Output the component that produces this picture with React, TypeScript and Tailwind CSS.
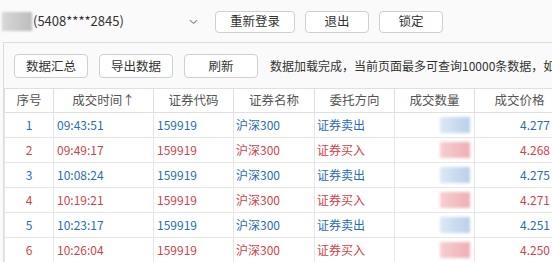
import React from 'react';

type Trade = {
  no: number;
  time: string;
  code: string;
  name: string;
  side: string;
  price: string;
  buy: boolean;
};

const trades: Trade[] = [
  { no: 1, time: '09:43:51', code: '159919', name: '沪深300', side: '证券卖出', price: '4.277', buy: false },
  { no: 2, time: '09:49:17', code: '159919', name: '沪深300', side: '证券买入', price: '4.268', buy: true },
  { no: 3, time: '10:08:24', code: '159919', name: '沪深300', side: '证券卖出', price: '4.275', buy: false },
  { no: 4, time: '10:19:21', code: '159919', name: '沪深300', side: '证券买入', price: '4.271', buy: true },
  { no: 5, time: '10:23:17', code: '159919', name: '沪深300', side: '证券卖出', price: '4.251', buy: false },
  { no: 6, time: '10:26:04', code: '159919', name: '沪深300', side: '证券买入', price: '4.250', buy: true },
];

const Btn: React.FC<{ label: string; w: string }> = ({ label, w }) => (
  <button
    className={`${w} h-[22px] shrink-0 rounded-[4px] border border-[#cfcfcf] bg-white text-[12.5px] text-[#333] leading-none`}
  >
    {label}
  </button>
);

const App: React.FC = () => {
  return (
    <div
      className="w-[552px] h-[262px] overflow-hidden bg-[#fafafa] text-[12px] text-[#333]"
      style={{ fontFamily: '"Noto Sans CJK SC", "Noto Sans", sans-serif' }}
    >
      {/* top bar */}
      <div className="h-[42px] flex items-center">
        <div className="ml-[2px] w-[30px] h-[19px] bg-gradient-to-r from-[#d8d8d8] to-[#bdbdbd] blur-[1px]" />
        <span className="ml-[1px] w-[150px] text-[13px]">(5408****2845)</span>
        <svg className="ml-[5px] w-[11px] h-[11px]" viewBox="0 0 12 12" fill="none" stroke="#888" strokeWidth="1.2">
          <path d="M2 4.5 L6 8 L10 4.5" />
        </svg>
        <div className="ml-[16px] flex gap-[10px] pt-[1px]">
          <Btn label="重新登录" w="w-[80px]" />
          <Btn label="退出" w="w-[64px]" />
          <Btn label="锁定" w="w-[64px]" />
        </div>
      </div>

      {/* panel */}
      <div className="ml-[3px] border-t border-l border-[#dcdcdc]">
        <div className="h-[45px] flex items-center pl-[10px] pt-[1px]">
          <div className="flex gap-[11px]">
            <Btn label="数据汇总" w="w-[74px] h-[24px]" />
            <Btn label="导出数据" w="w-[74px] h-[24px]" />
            <Btn label="刷新" w="w-[74px] h-[24px]" />
          </div>
          <span className="ml-[12px] whitespace-nowrap">数据加载完成，当前页面最多可查询10000条数据，如</span>
        </div>

        <table className="border-collapse bg-white table-fixed w-[560px]">
          <colgroup>
            <col className="w-[49px]" />
            <col className="w-[100px]" />
            <col className="w-[80px]" />
            <col className="w-[81px]" />
            <col className="w-[80px]" />
            <col className="w-[80px]" />
            <col className="w-[90px]" />
          </colgroup>
          <thead>
            <tr className="h-[24px] text-[#555]">
              {['序号', '成交时间↑', '证券代码', '证券名称', '委托方向', '成交数量', '成交价格'].map((h) => (
                <th
                  key={h}
                  className="border border-[#e0e0e0] font-normal text-[12.5px] text-center p-0 whitespace-nowrap"
                >
                  {h}
                </th>
              ))}
            </tr>
          </thead>
          <tbody>
            {trades.map((t) => {
              const color = t.buy ? 'text-[#d0444a]' : 'text-[#2b6cb6]';
              return (
                <tr key={t.no} className={`h-[25px] ${color}`}>
                  <td className="border border-[#e6e6e6] text-center p-0">{t.no}</td>
                  <td className="border border-[#e6e6e6] p-0 pl-[3px]">{t.time}</td>
                  <td className="border border-[#e6e6e6] p-0 pl-[3px]">{t.code}</td>
                  <td className="border border-[#e6e6e6] p-0 pl-[2px]">{t.name}</td>
                  <td className="border border-[#e6e6e6] p-0 pl-[2px]">{t.side}</td>
                  <td className="border border-[#e6e6e6] p-0">
                    <div className="flex justify-end pr-[4px]">
                      <div
                        className={`w-[30px] h-[16px] blur-[1.5px] ${
                          t.buy
                            ? 'bg-gradient-to-r from-[#f6cfd1] to-[#eeaeb3]'
                            : 'bg-gradient-to-r from-[#dde8f6] to-[#b9cfea]'
                        }`}
                      />
                    </div>
                  </td>
                  <td className="border border-[#e6e6e6] p-0 text-right pr-[14px]">{t.price}</td>
                </tr>
              );
            })}
          </tbody>
        </table>
      </div>
    </div>
  );
};

export default App;
